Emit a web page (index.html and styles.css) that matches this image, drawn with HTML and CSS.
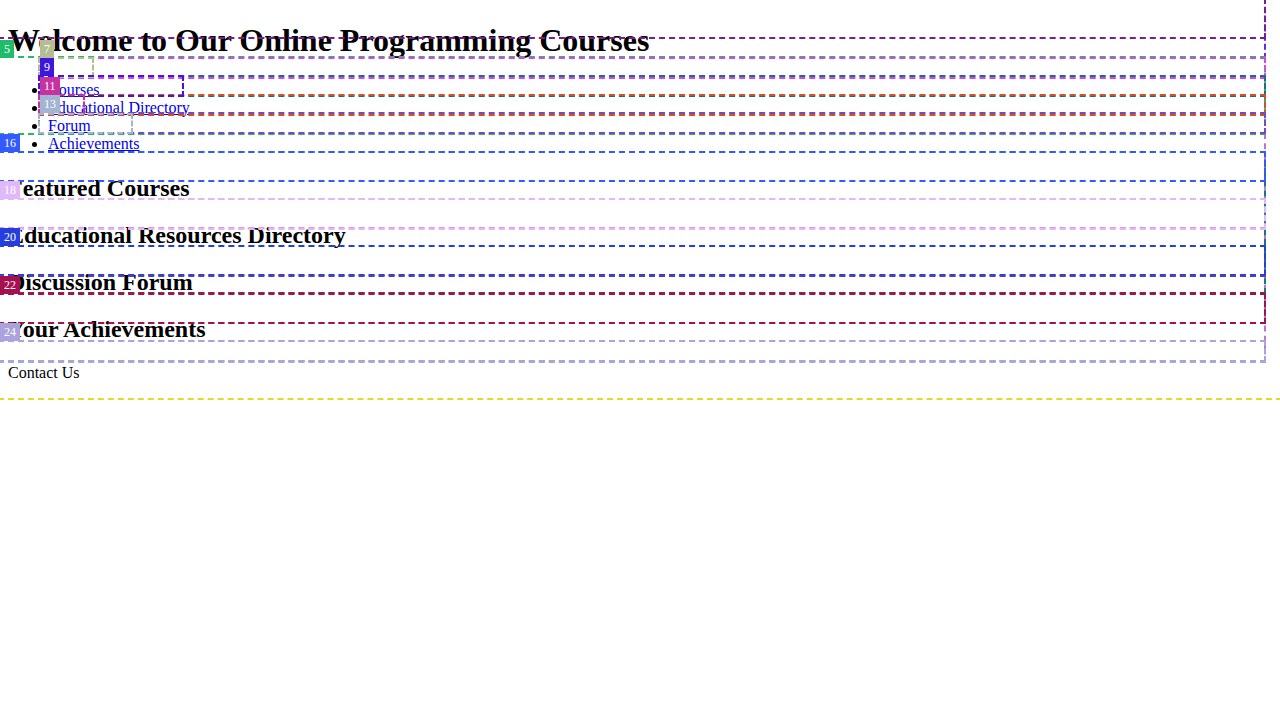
FILE: index.html
```html
<!DOCTYPE html>
<html lang="en">
<head>
<meta charset="utf-8">
<title>Online Programming Courses</title>
<link rel="stylesheet" href="styles.css">
</head>
<body>
<header>
<h1>Welcome to Our Online Programming Courses</h1>
</header>
<nav>
<ul>
<li><a href="#courses">Courses</a></li>
<li><a href="#directory">Educational Directory</a></li>
<li><a href="#forum">Forum</a></li>
<li><a href="#achievements">Achievements</a></li>
</ul>
</nav>
<main>
<section id="courses"><h2>Featured Courses</h2></section>
<section id="directory"><h2>Educational Resources Directory</h2></section>
<section id="forum"><h2>Discussion Forum</h2></section>
<section id="achievements"><h2>Your Achievements</h2></section>
</main>
<footer><p>Contact Us</p></footer>

<div class="overlay">
<div class="box page"></div>
<div class="box main"></div>
<div class="box sections"></div>
<div class="box header"></div>
<div class="box title"></div>
<div class="box nav"></div>
<div class="box item item-1"></div>
<div class="box item item-2"></div>
<div class="box item item-3"></div>
<div class="box item item-4"></div>
<div class="box link link-1"></div>
<div class="box link link-2"></div>
<div class="box link link-3"></div>
<div class="box link link-4"></div>
<div class="box footer"></div>
<div class="box heading-1"></div>
<div class="box between-1"></div>
<div class="box heading-2"></div>
<div class="box heading-3"></div>
<div class="box between-2"></div>
<div class="box between-3"></div>
<div class="box heading-4"></div>
<div class="box heading-5"></div>
<span class="tag tag-5">5</span>
<span class="tag tag-7">7</span>
<span class="tag tag-9">9</span>
<span class="tag tag-11">11</span>
<span class="tag tag-13">13</span>
<span class="tag tag-16">16</span>
<span class="tag tag-18">18</span>
<span class="tag tag-20">20</span>
<span class="tag tag-22">22</span>
<span class="tag tag-24">24</span>
</div>
</body>
</html>
```

FILE: styles.css
```css
body {
  margin: 8px;
  background: #fff;
  color: #000;
  font-family: "Liberation Serif", "Times New Roman", serif;
  font-size: 16px;
}
h1 { margin: 22px 0; font-size: 32px; line-height: 37px; }
header h1 { margin-top: 14px; margin-bottom: 22px; }
body { margin-top: 8px; }
ul { margin: 0 0 20px; padding-left: 40px; }
li { line-height: 18px; }
li + li { margin-top: 0; }
a { color: #00e; }
h2 { margin: 0 0 19px; font-size: 24px; line-height: 28px; }
main { padding-top: 1px; padding-bottom: 2px; }
footer p { margin: 0; line-height: 18px; }

/* Outlines and numbered tags drawn over the page */
.overlay {
  position: absolute;
  inset: 0;
  overflow: hidden;
  pointer-events: none;
}
.box {
  position: absolute;
  box-sizing: border-box;
  left: -2px;
  right: 14px;
  border: 2px dashed;
}
.page { top: -2px; left: -12px; right: -12px; height: 402px; border-color: #dddd2a; }
.main { top: 133px; height: 229px; border-color: #b877cc; }
.sections { top: 151px; height: 143px; border-color: #187878; }
.header { top: -2px; height: 61px; border-color: #5b2bea; border-bottom-color: transparent; }
.title { top: -2px; height: 41px; border-color: #7a1d91; }
.nav { top: 56px; height: 79px; border-color: #24ba6c; }
.item { left: 38px; }
.item-1 { top: 57px; height: 22px; border-color: #dc43e4; }
.item-2 { top: 75px; height: 22px; border-color: #1e6c87; }
.item-3 { top: 94px; height: 22px; border-color: #d15125; }
.item-4 { top: 112px; height: 22px; border-color: #7848c4; }
.link { right: auto; }
.link-1 { top: 57px; width: 56px; height: 21px; border-color: #b5bd94; }
.link-2 { top: 75px; width: 146px; height: 22px; border-color: #3c17de; }
.link-3 { top: 94px; width: 47px; height: 21px; border-color: #c6329f; }
.link-4 { top: 113px; width: 95px; height: 21px; border-color: #a3b5d0; }
.link { left: 38px; }
.footer { top: 340px; height: 23px; border-color: #94b5c3; }
.heading-1 { top: 151px; height: 31px; border-color: #335aff; }
.between-1 { top: 198px; height: 31px; border-color: #e895e0; }
.heading-2 { top: 198px; height: 32px; border-color: #e1b8fa; }
.heading-3 { top: 245px; height: 31px; border-color: #243fdd; }
.between-2 { top: 292px; height: 32px; border-color: #872845; }
.between-3 { top: 275px; height: 2px; border-width: 2px 0 0; border-color: #5040b8; }
.heading-4 { top: 293px; height: 31px; border-color: #a5104e; }
.heading-5 { top: 340px; height: 22px; border-color: #aaa3dc; }

.tag {
  position: absolute;
  left: 0;
  padding: 0 4px;
  color: #fff;
  font-size: 12px;
  line-height: 18px;
}
.tag-5 { top: 40px; background: #1fbd6a; }
.tag-7 { top: 40px; left: 40px; background: #b5bd94; }
.tag-9 { top: 58px; left: 40px; background: #3c17de; }
.tag-11 { top: 77px; left: 40px; background: #c6329f; }
.tag-13 { top: 95px; left: 40px; background: #a3b5d0; }
.tag-16 { top: 134px; background: #335aff; }
.tag-18 { top: 181px; background: #e1b8fa; }
.tag-20 { top: 228px; background: #243fdd; }
.tag-22 { top: 276px; background: #a5104e; }
.tag-24 { top: 323px; background: #aaa3dc; }
```
